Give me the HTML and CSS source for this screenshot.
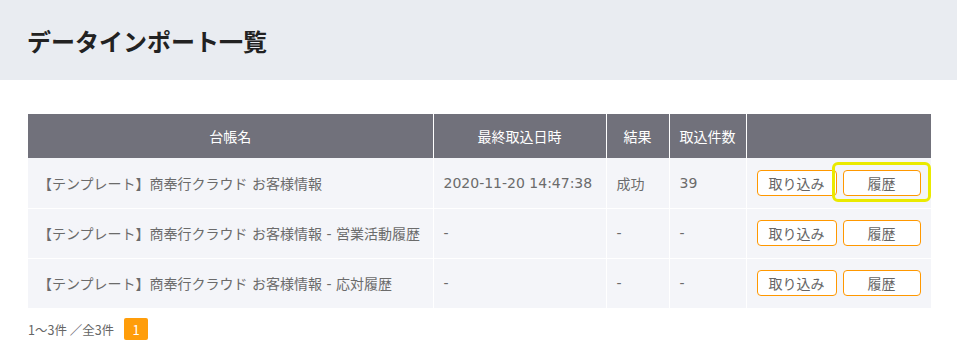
FILE: index.html
```html
<!DOCTYPE html>
<html lang="ja">
<head>
    <meta charset="UTF-8">
    <meta name="viewport" content="width=device-width, initial-scale=1.0">
    <title>データインポート一覧</title>
    <link rel="stylesheet" href="styles.css">
</head>
<body>
    <div class="page-header">
        <h1>データインポート一覧</h1>
    </div>

    <div class="content">
        <table class="import-table">
            <colgroup>
                <col class="col-name">
                <col class="col-date">
                <col class="col-result">
                <col class="col-count">
                <col class="col-actions">
            </colgroup>
            <thead>
                <tr>
                    <th>台帳名</th>
                    <th>最終取込日時</th>
                    <th>結果</th>
                    <th>取込件数</th>
                    <th></th>
                </tr>
            </thead>
            <tbody>
                <tr>
                    <td>【テンプレート】商奉行クラウド お客様情報</td>
                    <td>2020-11-20 14:47:38</td>
                    <td>成功</td>
                    <td>39</td>
                    <td class="actions">
                        <button class="btn btn-import">取り込み</button>
                        <span class="highlight-wrap">
                            <button class="btn btn-history">履歴</button>
                            <span class="highlight"></span>
                        </span>
                    </td>
                </tr>
                <tr>
                    <td>【テンプレート】商奉行クラウド お客様情報 - 営業活動履歴</td>
                    <td>-</td>
                    <td>-</td>
                    <td>-</td>
                    <td class="actions">
                        <button class="btn btn-import">取り込み</button>
                        <button class="btn btn-history">履歴</button>
                    </td>
                </tr>
                <tr>
                    <td>【テンプレート】商奉行クラウド お客様情報 - 応対履歴</td>
                    <td>-</td>
                    <td>-</td>
                    <td>-</td>
                    <td class="actions">
                        <button class="btn btn-import">取り込み</button>
                        <button class="btn btn-history">履歴</button>
                    </td>
                </tr>
            </tbody>
        </table>

        <div class="pager">
            <span class="pager-info">1〜3件 ／全3件</span>
            <span class="page-num">1</span>
        </div>
    </div>
</body>
</html>
```

FILE: styles.css
```css
body {
    margin: 0;
    background-color: #ffffff;
    font-family: "DejaVu Sans", "Noto Sans CJK JP", sans-serif;
    color: #666;
}

.page-header {
    background-color: #e9ecf1;
    height: 80px;
    display: flex;
    align-items: center;
    padding-left: 27px;
}

.page-header h1 {
    margin: 0;
    font-family: "Noto Sans CJK JP", sans-serif;
    font-size: 24px;
    font-weight: bold;
    color: #222;
}

.content {
    padding: 34px 26px 0 28px;
}

.import-table {
    width: 903px;
    border-collapse: collapse;
    table-layout: fixed;
    font-size: 14px;
}

.col-name { width: 405px; }
.col-date { width: 173px; }
.col-result { width: 63px; }
.col-count { width: 77px; }
.col-actions { width: 185px; }

.import-table th {
    background-color: #71717b;
    color: #fff;
    font-weight: normal;
    height: 44px;
    padding: 0;
    text-align: center;
    border-left: 1px solid #fff;
    box-sizing: border-box;
}

.import-table th:first-child {
    border-left: none;
}

.import-table td {
    background-color: #f4f5f9;
    height: 50px;
    padding: 0 10px;
    border-left: 1px solid #fff;
    border-top: 1px solid #fff;
    white-space: nowrap;
    box-sizing: border-box;
    color: #6b6b6b;
}

.import-table td:first-child {
    border-left: none;
}

.import-table tbody tr:first-child td {
    border-top: none;
}

.actions {
    font-size: 0;
}

.btn {
    font-family: "DejaVu Sans", "Noto Sans CJK JP", sans-serif;
    font-size: 14px;
    color: #666;
    background-color: #fff;
    border: 1px solid #ff9800;
    border-radius: 4px;
    height: 26px;
    padding: 0;
    cursor: pointer;
    vertical-align: middle;
}

.btn-import {
    width: 80px;
    margin-right: 6px;
}

.btn-history {
    width: 78px;
}

.highlight-wrap {
    position: relative;
    display: inline-block;
    vertical-align: middle;
    font-size: 0;
}

.highlight {
    position: absolute;
    left: -11px;
    top: -8px;
    width: 99px;
    height: 40px;
    border: 3px solid #eaea00;
    border-radius: 6px;
    box-sizing: border-box;
    pointer-events: none;
}

.pager {
    display: flex;
    align-items: center;
    margin-top: 10px;
    font-family: "Noto Sans CJK JP", sans-serif;
    font-size: 12.5px;
}

.pager-info {
    color: #666;
}

.page-num {
    display: inline-flex;
    align-items: center;
    justify-content: center;
    width: 24px;
    height: 22px;
    margin-left: 10px;
    background-color: #ff9d0a;
    color: #fff;
    font-size: 13px;
    border-radius: 2px;
}
```
